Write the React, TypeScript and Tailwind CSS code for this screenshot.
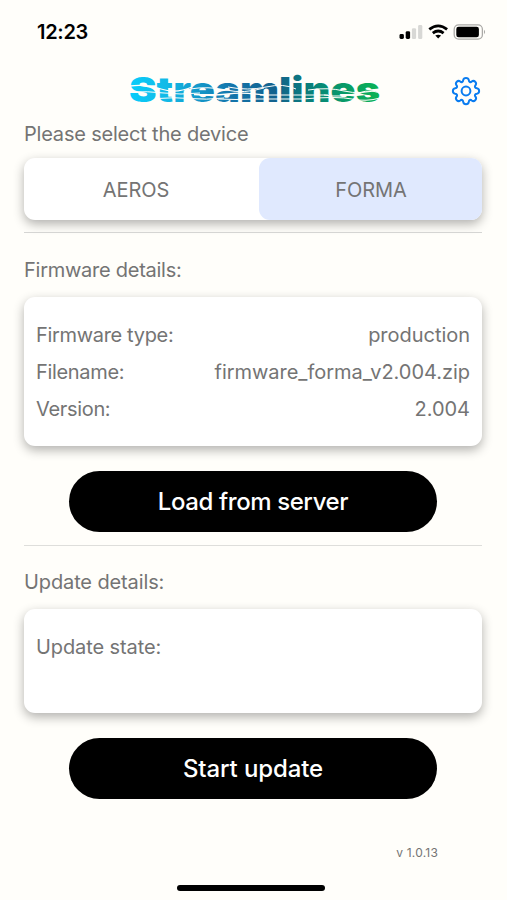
import { useState } from 'react';
import type { ReactNode } from 'react';
import clsx from 'clsx';

const devices = ['AEROS', 'FORMA'];

const firmware = [
  { label: 'Firmware type:', value: 'production' },
  { label: 'Filename:', value: 'firmware_forma_v2.004.zip' },
  { label: 'Version:', value: '2.004' },
];

function StatusBar() {
  return (
    <div className="flex h-[62px] items-center justify-between pt-px pl-[37px] pr-[20px]">
      <span className="text-[20px] leading-6 font-semibold tracking-[-0.3px] text-black">12:23</span>
      <svg className="-mt-px" width="88" height="20" viewBox="0 0 88 20">
        <rect x="0.5" y="13" width="4.4" height="5" rx="1.4" />
        <rect x="6.7" y="10.2" width="4.4" height="7.8" rx="1.4" />
        <rect x="12.9" y="7.2" width="4.2" height="10.8" rx="1.3" fill="#d8d8d5" />
        <rect x="19.1" y="4" width="4.2" height="14" rx="1.3" fill="#d8d8d5" />
        <g fill="none" stroke="#000" strokeWidth="2.8">
          <path d="M30.3 8.4 Q39.2 1.4 48.1 8.4" />
          <path d="M33.8 12.2 Q39.2 7.9 44.6 12.2" />
        </g>
        <path d="M36.3 14.6 Q39.2 12.8 42.1 14.6 L39.2 17.6 Z" />
        <rect x="55.2" y="3.8" width="28.2" height="14.4" rx="4.4" fill="none" stroke="#aaa9a6" strokeWidth="1.3" />
        <rect x="57.3" y="5.8" width="22.6" height="10.4" rx="2.3" />
        <path d="M85 8.8 Q87.2 11 85 13.2 Z" fill="#aaa9a6" />
      </svg>
    </div>
  );
}

function Logo() {
  return (
    <svg className="overflow-visible" width="254" height="46" viewBox="0 -3 254 46">
      <defs>
        <linearGradient id="brand" gradientUnits="userSpaceOnUse" x1="0" y1="0" x2="252" y2="0">
          <stop offset="0" stopColor="#08ccfa" />
          <stop offset="0.15" stopColor="#12b9e6" />
          <stop offset="0.4" stopColor="#1475ab" />
          <stop offset="0.58" stopColor="#13628c" />
          <stop offset="0.76" stopColor="#078a75" />
          <stop offset="1" stopColor="#0bb552" />
        </linearGradient>
      </defs>
      <text
        x="-1"
        y="31"
        textLength="251"
        lengthAdjust="spacingAndGlyphs"
        fontSize="34.5"
        fontWeight="900"
        fill="url(#brand)"
      >
        Streamlines
      </text>
      <g fill="none" stroke="#fffefa" strokeWidth="1">
        <path d="M0 15 Q16 13 31 18 T62 16" strokeWidth="1.3" />
        <path d="M0 21 Q18 20 34 22 T70 22" />
        <path d="M28 27.5 Q44 26 60 27.5 T94 27" />
        <path d="M60 18 Q78 15 96 19 T134 17" />
        <path d="M64 23.5 Q84 25 98 23 T134 24" strokeWidth="1.3" />
        <path d="M88 28 Q106 29 124 28 H172" />
        <path d="M98 16 Q118 20 136 16 T166 18" />
        <path d="M130 24 H198" />
        <path d="M178 19 Q198 16 214 20 T252 18" />
        <path d="M194 24 Q212 27 228 22 T252 24" />
        <path d="M172 28 Q208 25 222 28 T250 27" />
      </g>
    </svg>
  );
}

function GearIcon() {
  return (
    <svg width="30" height="30" viewBox="0 0 30 30" fill="none" stroke="#0a7cf0" strokeWidth="2" strokeLinejoin="round">
      <path d="M12.2 4.2 C12.7 1.1 17.3 1.1 17.8 4.2 C18 6.1 19.5 6.7 20.7 5.5 C23.2 3.7 26.3 6.8 24.5 9.3 C23.3 10.5 23.9 12 25.8 12.2 C28.9 12.7 28.9 17.3 25.8 17.8 C23.9 18 23.3 19.5 24.5 20.7 C26.3 23.2 23.2 26.3 20.7 24.5 C19.5 23.3 18 23.9 17.8 25.8 C17.3 28.9 12.7 28.9 12.2 25.8 C12 23.9 10.5 23.3 9.3 24.5 C6.8 26.3 3.7 23.2 5.5 20.7 C6.7 19.5 6.1 18 4.2 17.8 C1.1 17.3 1.1 12.7 4.2 12.2 C6.1 12 6.7 10.5 5.5 9.3 C3.7 6.8 6.8 3.7 9.3 5.5 C10.5 6.7 12 6.1 12.2 4.2 Z" />
      <circle cx="15" cy="15" r="4.4" />
    </svg>
  );
}

function Card({ className, children }: { className?: string; children?: ReactNode }) {
  return (
    <div className={clsx('rounded-[11px] bg-white shadow-[0_4px_11px_rgba(0,0,0,0.31)]', className)}>
      {children}
    </div>
  );
}

function PillButton({ className, children }: { className?: string; children: ReactNode }) {
  return (
    <button
      className={clsx('mx-auto block h-[61px] w-[368px] rounded-full bg-black text-[24px] font-medium text-white', className)}
    >
      {children}
    </button>
  );
}

export default function App() {
  const [device, setDevice] = useState('FORMA');

  return (
    <div className="flex h-[900px] w-[507px] flex-col overflow-hidden bg-[#fffefa] font-['Inter',sans-serif] text-[20px] leading-6 text-[#747474]">
      <StatusBar />

      <header className="flex h-[58px] items-center pl-[130px]">
        <Logo />
        <div className="-mt-px ml-[67px]">
          <GearIcon />
        </div>
      </header>

      <main className="w-[482px] pt-[2px] pl-6">
        <h2 className="tracking-[-0.2px]">Please select the device</h2>
        <Card className="mt-3 flex h-[62px]">
          {devices.map((name) => (
            <button
              key={name}
              onClick={() => setDevice(name)}
              className={clsx(
                'rounded-[11px] pt-px tracking-[-0.1px] first:w-[235px] first:pr-[11px] last:flex-1 last:pl-px',
                device === name && 'bg-[#e0e9fe]'
              )}
            >
              {name}
            </button>
          ))}
        </Card>
        <hr className="mt-3 border-[#d5d5d3]" />

        <h2 className="mt-[25px] tracking-[-0.26px]">Firmware details:</h2>
        <Card className="mt-[15px] flex h-[149px] flex-col gap-[13.2px] px-3 pt-[26px]">
          {firmware.map((row) => (
            <div key={row.label} className="flex justify-between">
              <span className="tracking-[-0.33px]">{row.label}</span>
              <span className="tracking-[-0.03px]">{row.value}</span>
            </div>
          ))}
        </Card>
        <div className="mt-[25px]">
          <PillButton className="tracking-[-0.4px]">Load from server</PillButton>
        </div>
        <hr className="mt-[13px] border-[#dededb]" />

        <h2 className="mt-6 tracking-[-0.12px]">Update details:</h2>
        <Card className="mt-[15px] h-[104px] pt-[26px] pl-3 tracking-[-0.1px]">Update state:</Card>
        <div className="mt-[25px]">
          <PillButton className="tracking-[-0.1px]">Start update</PillButton>
        </div>
      </main>

      <div className="mt-[46px] pr-[69px] text-right text-[12px] leading-4 tracking-[0.2px]">v 1.0.13</div>
      <div className="mt-[24px] ml-[177px] h-[6px] w-[148px] rounded-full bg-black" />
    </div>
  );
}
